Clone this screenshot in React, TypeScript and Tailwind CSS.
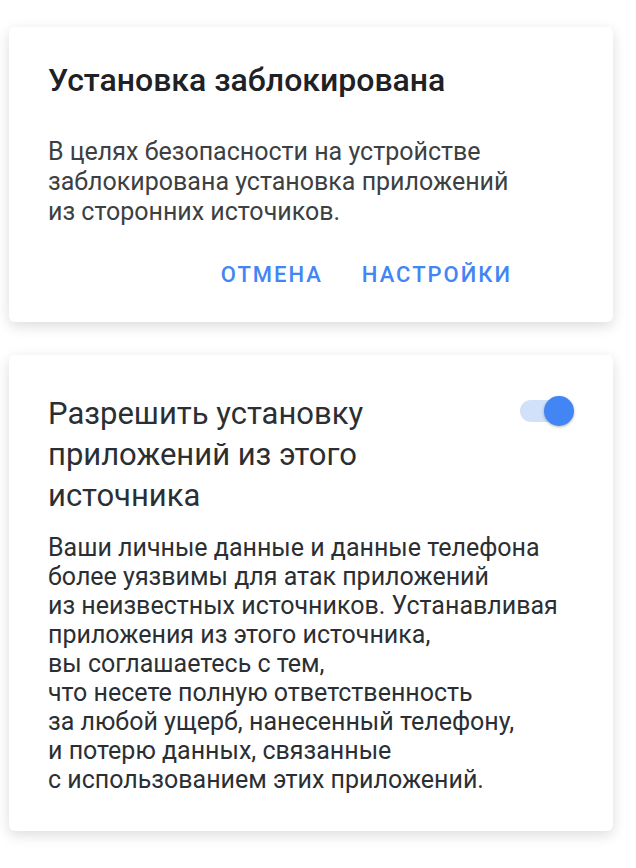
import { useState } from 'react';

const font = { fontFamily: 'Roboto, "Noto Sans", sans-serif' };

function Switch({ on, onChange }: { on: boolean; onChange: (v: boolean) => void }) {
  return (
    <button
      type="button"
      onClick={() => onChange(!on)}
      className="relative mt-[7px] h-[22px] w-[58px] shrink-0"
    >
      <span className={`absolute left-[2px] top-0 h-[22px] w-[42px] rounded-full ${on ? 'bg-[#d0e1f9]' : 'bg-[#d6d6d6]'}`} />
      <span
        className={`absolute top-[-4px] h-[30px] w-[30px] rounded-full shadow-[0_1px_3px_rgba(0,0,0,0.3)] ${
          on ? 'left-[26px] bg-[#4285f4]' : 'left-0 bg-[#f5f5f5]'
        }`}
      />
    </button>
  );
}

export default function App() {
  const [allowed, setAllowed] = useState(true);

  return (
    <div className="min-h-[868px] bg-white px-[9px] pt-[27px] text-[#2b2f33]" style={font}>
      {/* blocked-install dialog */}
      <div className="w-[604px] rounded-[6px] bg-white pb-[33px] pl-[39px] pr-[40px] pt-[33px] shadow-[0_4px_14px_rgba(0,0,0,0.14)]">
        <h2 className="text-[32px] font-medium leading-[40px] text-[#202124]">Установка заблокирована</h2>
        <p className="mt-[37px] text-[25px] leading-[30px] text-[#3c4043]">
          В целях безопасности на устройстве
          <br />
          заблокирована установка приложений
          <br />
          из сторонних источиков.
        </p>
        <div className="mt-[34px] flex justify-end gap-[39px] pr-[61px]">
          <button className="text-[22px] font-medium uppercase leading-[28px] tracking-[2px] text-[#4285f4]">Отмена</button>
          <button className="text-[22px] font-medium uppercase leading-[28px] tracking-[2px] text-[#4285f4]">Настройки</button>
        </div>
      </div>

      {/* unknown-sources setting */}
      <div className="mt-[33px] w-[604px] rounded-[6px] bg-white pb-[37px] pl-[39px] pr-[37px] pt-[38px] shadow-[0_4px_14px_rgba(0,0,0,0.14)]">
        <div className="flex items-start justify-between">
          <h2 className="text-[31px] leading-[41px] text-[#2b2f33]">
            Разрешить установку
            <br />
            приложений из этого
            <br />
            источника
          </h2>
          <Switch on={allowed} onChange={setAllowed} />
        </div>
        <p className="mt-[17px] text-[25px] leading-[29px] text-[#2b2f33]">
          Ваши личные данные и данные телефона
          <br />
          более уязвимы для атак приложений
          <br />
          из неизвестных источников. Устанавливая
          <br />
          приложения из этого источника,
          <br />
          вы соглашаетесь с тем,
          <br />
          что несете полную ответственность
          <br />
          за любой ущерб, нанесенный телефону,
          <br />
          и потерю данных, связанные
          <br />
          с использованием этих приложений.
        </p>
      </div>
    </div>
  );
}
